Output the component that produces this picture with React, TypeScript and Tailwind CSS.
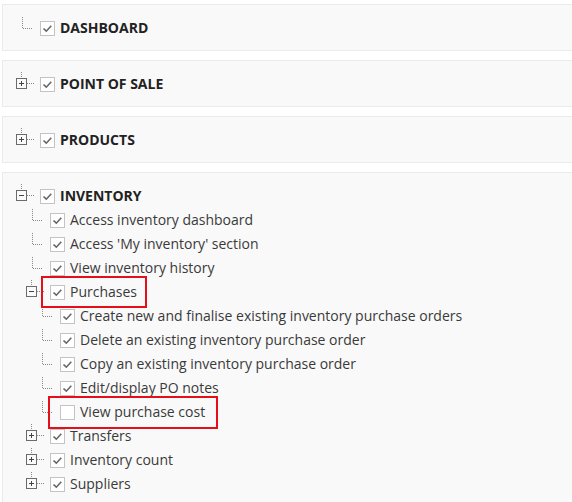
import React from "react";

type Kind = "leaf" | "plus" | "minus";

type Node = {
  label: string;
  level: number;
  kind: Kind;
  checked?: boolean;
  bold?: boolean;
  mark?: "a" | "b";
};

function Connector({ kind }: { kind: Kind }) {
  if (kind === "leaf") {
    return (
      <svg width="26" height="24" className="shrink-0" viewBox="0 0 26 24">
        <path d="M8.5 1V12.5H19" fill="none" stroke="#8a8a8a" strokeDasharray="1 1" />
      </svg>
    );
  }
  return (
    <svg width="26" height="24" className="shrink-0" viewBox="0 0 26 24">
      <path d="M7.5 0V6M13 11.5H21" fill="none" stroke="#8a8a8a" strokeDasharray="1 1" />
      <rect x="2.5" y="6.5" width="10" height="10" fill="#fafafa" stroke="#6b6b6b" />
      <path d={kind === "plus" ? "M5 11.5H10M7.5 9V14" : "M5 11.5H10"} stroke="#444" />
    </svg>
  );
}

function Checkbox({ checked }: { checked?: boolean }) {
  return (
    <span className="flex h-[15px] w-[15px] shrink-0 items-center justify-center border border-[#c4c4c4] bg-white">
      {checked && (
        <svg width="13" height="13" viewBox="0 0 13 13">
          <path d="M2.5 6.5L5.3 9.2L10.3 3.8" fill="none" stroke="#666" strokeWidth="1.6" />
        </svg>
      )}
    </span>
  );
}

function Row({ node }: { node: Node }) {
  const indent = ["ml-0", "ml-[10px]", "ml-[20px]"][node.level];
  return (
    <div className={`flex h-6 items-center ${indent}`}>
      <Connector kind={node.kind} />
      <span className="relative flex items-center gap-[5px]">
        <Checkbox checked={node.checked} />
        <span
          className={
            node.bold
              ? "text-[14px] font-bold uppercase leading-[18px] text-[#222]"
              : "text-[14px] leading-[18px] text-[#3a3a3a]"
          }
        >
          {node.label}
        </span>
        {node.mark === "a" && (
          <span className="pointer-events-none absolute -top-[7px] -bottom-[7px] -left-[9px] -right-[10px] border-2 border-[#e3101a]" />
        )}
        {node.mark === "b" && (
          <span className="pointer-events-none absolute -top-[7px] -bottom-[8px] -left-[12px] -right-[13px] border-2 border-[#e3101a]" />
        )}
      </span>
    </div>
  );
}

const panels: Node[][] = [
  [{ label: "Dashboard", level: 0, kind: "leaf", checked: true, bold: true }],
  [{ label: "Point of sale", level: 0, kind: "plus", checked: true, bold: true }],
  [{ label: "Products", level: 0, kind: "plus", checked: true, bold: true }],
  [
    { label: "Inventory", level: 0, kind: "minus", checked: true, bold: true },
    { label: "Access inventory dashboard", level: 1, kind: "leaf", checked: true },
    { label: "Access 'My inventory' section", level: 1, kind: "leaf", checked: true },
    { label: "View inventory history", level: 1, kind: "leaf", checked: true },
    { label: "Purchases", level: 1, kind: "minus", checked: true, mark: "a" },
    { label: "Create new and finalise existing inventory purchase orders", level: 2, kind: "leaf", checked: true },
    { label: "Delete an existing inventory purchase order", level: 2, kind: "leaf", checked: true },
    { label: "Copy an existing inventory purchase order", level: 2, kind: "leaf", checked: true },
    { label: "Edit/display PO notes", level: 2, kind: "leaf", checked: true },
    { label: "View purchase cost", level: 2, kind: "leaf", checked: false, mark: "b" },
    { label: "Transfers", level: 1, kind: "plus", checked: true },
    { label: "Inventory count", level: 1, kind: "plus", checked: true },
    { label: "Suppliers", level: 1, kind: "plus", checked: true },
  ],
];

export default function App() {
  return (
    <div
      className="h-[502px] w-[572px] overflow-hidden bg-white pt-[4px] pl-[2px]"
      style={{ fontFamily: '"Open Sans", "Noto Sans", sans-serif' }}
    >
      <div className="flex w-[580px] flex-col gap-[9px]">
        {panels.map((rows, i) => (
          <div
            key={i}
            className="border border-[#ebebeb] bg-[#f9f9f9] pt-[11px] pb-[10px] pl-[11px]"
          >
            {rows.map((n) => (
              <Row key={n.label} node={n} />
            ))}
          </div>
        ))}
      </div>
    </div>
  );
}
